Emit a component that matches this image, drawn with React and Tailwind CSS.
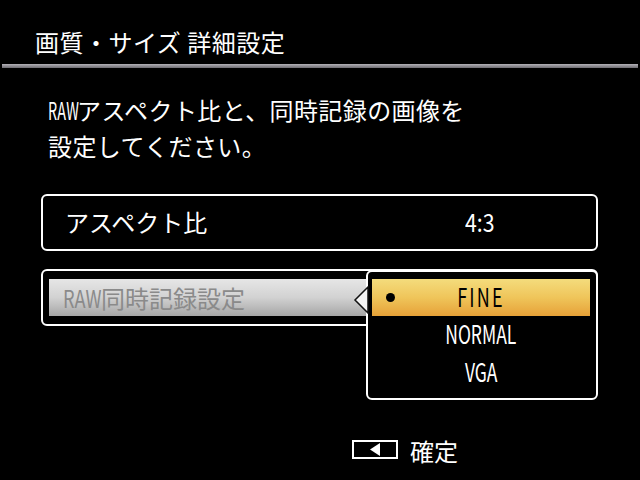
import React from "react";

const jp = { fontFamily: '"Noto Sans CJK JP", sans-serif' };

const options = ["FINE", "NORMAL", "VGA"];

// The camera font sets its latin letters narrow; squeeze them horizontally
const Narrow = ({ children, className = "" }) => (
  <span className={`inline-block ${className}`}>{children}</span>
);

// Left-pointing arrow that joins the setting bar to its option list
const Pointer = () => (
  <svg
    className="absolute left-[-15px] top-[14px]"
    width="16"
    height="28"
    viewBox="0 0 16 28"
  >
    <polygon points="15,1 2,14 15,27" fill="#f4f4f4" stroke="#111" strokeWidth="1.5" />
  </svg>
);

const OptionList = ({ selected }) => (
  <div className="absolute left-[325px] top-[1px] h-[130px] w-[232px] rounded-[6px] border-2 border-white bg-black pb-[7px] pl-[4px] pr-[6px] pt-[7px]">
    <Pointer />
    {options.map((opt) =>
      opt === selected ? (
        <div
          key={opt}
          className="relative flex h-[37px] items-center justify-center bg-gradient-to-b from-[#f4dc7c] via-[#efc55a] to-[#e6a137] pb-[3px] text-[25px] leading-none text-black"
        >
          <span className="absolute left-[14px] top-[14px] h-[9px] w-[9px] rounded-full bg-black" />
          <Narrow className="scale-x-[0.72] tracking-[3px]">{opt}</Narrow>
        </div>
      ) : (
        <div
          key={opt}
          className="flex h-[38px] items-center justify-center pb-[4px] text-[25px] leading-none text-white"
        >
          <Narrow className="scale-x-[0.7]">{opt}</Narrow>
        </div>
      )
    )}
  </div>
);

export default function App() {
  return (
    <div className="h-[480px] w-[640px] overflow-hidden bg-black text-white" style={jp}>
      <div className="flex h-[64px] items-center pl-[35px] pt-[20px] text-[24px] leading-none tracking-[0.5px]">
        画質・サイズ 詳細設定
      </div>
      <div className="mx-[2px] h-[4px] bg-gradient-to-b from-[#b4b2b8] to-[#6e6c72]" />

      <p className="mt-[24px] pl-[48px] text-[24px] leading-[36px] tracking-[0.4px]">
        <Narrow className="w-[29px] origin-left scale-x-[0.6]">RAW</Narrow>
        アスペクト比と、同時記録の画像を
        <br />
        設定してください。
      </p>

      <div className="ml-[41px] mt-[30px] flex h-[57px] w-[557px] items-center rounded-[6px] border-2 border-white pb-[2px] pl-[22px] text-[24px]">
        <span className="flex-1">アスペクト比</span>
        <span className="w-[131px] text-[25px]">
          <Narrow className="origin-left scale-x-[0.85]">4:3</Narrow>
        </span>
      </div>

      <div className="relative ml-[41px] mt-[18px] w-[557px]">
        <div className="h-[57px] rounded-[6px] border-2 border-white pb-[8px] pl-[6px] pr-[6px] pt-[8px]">
          <div className="flex h-[37px] items-center bg-gradient-to-b from-[#e6e6e6] via-[#d2d2d2] to-[#a6a6a6] pl-[14px] text-[24px] text-[#8a8a8a]">
            <Narrow className="w-[38px] origin-left scale-x-[0.76]">RAW</Narrow>
            同時記録設定
          </div>
        </div>
        <OptionList selected="FINE" />
      </div>

      <div className="mt-[113px] flex items-center pl-[352px]">
        <div className="mb-[4px] flex h-[19px] w-[46px] items-center justify-center border-2 border-white">
          <svg width="11" height="13" viewBox="0 0 11 13">
            <polygon points="10,0 0,6.5 10,13" fill="#fff" />
          </svg>
        </div>
        <span className="ml-[12px] text-[24px] leading-none">確定</span>
      </div>
    </div>
  );
}
